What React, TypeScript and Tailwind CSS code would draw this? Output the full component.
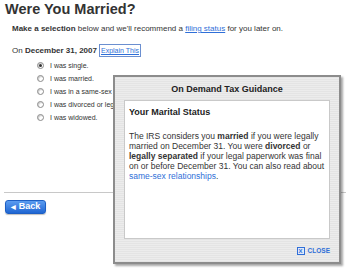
import React from "react";

function Radio({ checked }: { checked?: boolean }) {
  return (
    <span className="relative flex h-[7px] w-[7px] shrink-0 items-center justify-center rounded-full border border-[#8a8a8a] bg-white shadow-[inset_1px_1px_1px_rgba(0,0,0,0.2)]">
      {checked && <span className="h-[3px] w-[3px] rounded-full bg-[#333]" />}
    </span>
  );
}

const options = [
  { label: "I was single.", checked: true },
  { label: "I was married." },
  { label: "I was in a same-sex relationship." },
  { label: "I was divorced or legally separated." },
  { label: "I was widowed." },
];

export default function App() {
  return (
    <div className="relative h-[276px] w-[350px] overflow-hidden bg-white font-['Liberation_Sans',Arial,sans-serif] text-[#333]">
      <h1 className="pl-[5px] pt-[1px] text-[14.5px] font-bold leading-[16px] text-[#333]">
        Were You Married?
      </h1>
      <p className="mt-[6px] pl-[12px] text-[8px] leading-[11px]">
        <b>Make a selection</b> below and we'll recommend a{" "}
        <span className="text-[#2f6fd8] underline">filing status</span> for you later on.
      </p>
      <div className="mt-[10px] flex items-center pl-[12px] text-[8px] leading-[11px]">
        <span>
          On <b>December 31, 2007</b>
        </span>
        <span className="ml-[2px] border border-[#6b8fd0] px-[1px] text-[7px] leading-[11px] text-[#2f6fd8] underline">
          Explain This
        </span>
      </div>
      <div className="mt-[5px] flex flex-col gap-[6px] pl-[37px] text-[7px] leading-[7px]">
        {options.map((o) => (
          <div key={o.label} className="flex items-center gap-[6px] whitespace-nowrap">
            <Radio checked={o.checked} />
            <span>{o.label}</span>
          </div>
        ))}
      </div>
      <div className="mx-[4px] mt-[71px] border-t border-[#c8c8c8]" />
      <div className="ml-[5px] mt-[7px] flex h-[14px] w-[41px] items-center justify-center gap-[3px] rounded-[3px] border border-[#1d5fc4] bg-gradient-to-b from-[#5b9cf0] to-[#1f66d2] text-[9px] font-bold text-white shadow-[0_1px_1px_rgba(0,0,0,0.25)]">
        <span className="text-[6px]">◀</span>
        <span>Back</span>
      </div>

      <div className="absolute left-[113px] top-[75px] flex h-[189px] w-[228px] flex-col border-2 border-[#8c8c8c] bg-[repeating-linear-gradient(0deg,#e4e4e4_0px,#e4e4e4_1px,#ececec_1px,#ececec_2px)] shadow-[2px_2px_2px_rgba(0,0,0,0.35)]">
        <div className="flex h-[23px] items-center justify-center pt-[2px] text-[9px] font-bold text-[#222]">
          On Demand Tax Guidance
        </div>
        <div className="mx-[9px] h-[139px] border border-[#c9c9c9] bg-white px-[4px] pt-[6px]">
          <div className="text-[9px] font-bold leading-[11px] text-[#222]">Your Marital Status</div>
          <p className="mt-[13px] text-[8.5px] leading-[10px] text-[#333]">
            The IRS considers you <b>married</b> if you were legally married on December 31. You
            were <b>divorced</b> or <b>legally separated</b> if your legal paperwork was final on or
            before December 31. You can also read about{" "}
            <span className="text-[#2f6fd8]">same-sex relationships</span>.
          </p>
        </div>
        <div className="flex flex-1 items-center justify-end gap-[3px] pr-[9px] pt-[1px]">
          <span className="flex h-[8px] w-[8px] items-center justify-center border border-[#2f6fd8] bg-[#dfe9fa] text-[6px] font-bold leading-none text-[#2f6fd8]">
            X
          </span>
          <span className="text-[6.5px] font-bold text-[#2f6fd8]">CLOSE</span>
        </div>
      </div>
    </div>
  );
}
